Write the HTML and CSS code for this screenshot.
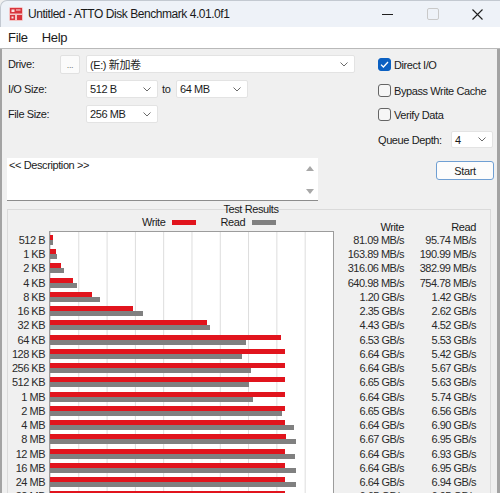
FILE: index.html
```html
<!DOCTYPE html>
<html lang="en">
<head>
    <meta charset="UTF-8">
    <meta name="viewport" content="width=device-width, initial-scale=1.0">
    <title>ATTO Disk Benchmark</title>
    <link rel="stylesheet" href="styles.css">
</head>
<body>

<div class="window">
    <div class="titlebar">
        <svg class="app-icon" width="14" height="14" viewBox="0 0 14 14">
            <rect width="14" height="14" rx="1.5" fill="#f4c4c4"/>
            <rect x="1" y="1" width="12" height="5.5" fill="#d8343c"/>
            <rect x="2.5" y="2.5" width="3" height="2.5" fill="#fbe3e3"/>
            <rect x="7" y="2.5" width="4.5" height="1" fill="#fbe3e3"/>
            <rect x="1" y="8" width="5" height="5" fill="#d8343c"/>
            <rect x="8" y="8" width="5" height="5" fill="#d8343c"/>
            <rect x="2.5" y="9.5" width="2" height="2" fill="#fbe3e3"/>
        </svg>
        <span class="title">Untitled - ATTO Disk Benchmark 4.01.0f1</span>
        <div class="controls">
            <span class="ctl">
                <svg width="11" height="11" viewBox="0 0 11 11"><path d="M0 5.5H11" stroke="#1f1f1f" stroke-width="1"/></svg>
            </span>
            <span class="ctl">
                <svg width="12" height="12" viewBox="0 0 12 12"><rect x="0.5" y="0.5" width="11" height="11" rx="1.5" fill="none" stroke="#c9c9c9"/></svg>
            </span>
            <span class="ctl">
                <svg width="11" height="11" viewBox="0 0 11 11"><path d="M0.5 0.5L10.5 10.5M10.5 0.5L0.5 10.5" stroke="#1f1f1f" stroke-width="1.1"/></svg>
            </span>
        </div>
    </div>

    <div class="menubar">
        <span>File</span>
        <span>Help</span>
    </div>

    <div class="main">
        <div class="top">
            <div class="form">
                <div class="row row-drive">
                    <span class="lbl lbl-drive">Drive:</span>
                    <span class="browse">...</span>
                    <div class="select select-drive">
                        <span>(E:) 新加卷</span>
                        <svg class="chev" width="8" height="5" viewBox="0 0 8 5"><path d="M0.5 0.5L4 4L7.5 0.5" fill="none" stroke="#6a6a6a"/></svg>
                    </div>
                </div>
                <div class="row row-io">
                    <span class="lbl lbl-wide">I/O Size:</span>
                    <div class="select select-sm">
                        <span>512 B</span>
                        <svg class="chev" width="8" height="5" viewBox="0 0 8 5"><path d="M0.5 0.5L4 4L7.5 0.5" fill="none" stroke="#6a6a6a"/></svg>
                    </div>
                    <span class="to">to</span>
                    <div class="select select-sm">
                        <span>64 MB</span>
                        <svg class="chev" width="8" height="5" viewBox="0 0 8 5"><path d="M0.5 0.5L4 4L7.5 0.5" fill="none" stroke="#6a6a6a"/></svg>
                    </div>
                </div>
                <div class="row row-file">
                    <span class="lbl lbl-wide">File Size:</span>
                    <div class="select select-sm">
                        <span>256 MB</span>
                        <svg class="chev" width="8" height="5" viewBox="0 0 8 5"><path d="M0.5 0.5L4 4L7.5 0.5" fill="none" stroke="#6a6a6a"/></svg>
                    </div>
                </div>
                <div class="desc">
                    <span>&lt;&lt; Description &gt;&gt;</span>
                    <div class="scroll">
                        <span class="arrow-up"></span>
                        <span class="arrow-down"></span>
                    </div>
                </div>
            </div>

            <div class="options">
                <div class="opt">
                    <span class="check on">
                        <svg width="9" height="7" viewBox="0 0 9 7"><path d="M1 3.6L3.4 6L8 1" fill="none" stroke="#fff" stroke-width="1.3"/></svg>
                    </span>
                    Direct I/O
                </div>
                <div class="opt opt-2"><span class="check"></span>Bypass Write Cache</div>
                <div class="opt opt-3"><span class="check"></span>Verify Data</div>
                <div class="queue">
                    <span class="q-label">Queue Depth:</span>
                    <div class="select select-q">
                        <span>4</span>
                        <svg class="chev" width="8" height="5" viewBox="0 0 8 5"><path d="M0.5 0.5L4 4L7.5 0.5" fill="none" stroke="#6a6a6a"/></svg>
                    </div>
                </div>
                <button class="start">Start</button>
            </div>
        </div>

        <div class="results">
            <div class="results-title">Test Results</div>
            <div class="results-grid">
                <div></div>
                <div class="legend">
                    <span>Write</span><span class="swatch swatch-write"></span>
                    <span class="legend-read">Read</span><span class="swatch swatch-read"></span>
                </div>
                <div class="vhead"><span>Write</span><span>Read</span></div>

                <div class="sizes" id="sizes"></div>
                <div class="chart" id="chart"></div>
                <div class="values" id="values"></div>
            </div>
        </div>
    </div>
</div>

<script>
    const sizes = ['512 B', '1 KB', '2 KB', '4 KB', '8 KB', '16 KB', '32 KB', '64 KB', '128 KB', '256 KB',
        '512 KB', '1 MB', '2 MB', '4 MB', '8 MB', '12 MB', '16 MB', '24 MB', '32 MB'];
    const writes = ['81.09 MB/s', '163.89 MB/s', '316.06 MB/s', '640.98 MB/s', '1.20 GB/s', '2.35 GB/s',
        '4.43 GB/s', '6.53 GB/s', '6.64 GB/s', '6.64 GB/s', '6.65 GB/s', '6.64 GB/s', '6.65 GB/s',
        '6.64 GB/s', '6.67 GB/s', '6.64 GB/s', '6.64 GB/s', '6.64 GB/s', '6.65 GB/s'];
    const reads = ['95.74 MB/s', '190.99 MB/s', '382.99 MB/s', '754.78 MB/s', '1.42 GB/s', '2.62 GB/s',
        '4.52 GB/s', '5.53 GB/s', '5.42 GB/s', '5.67 GB/s', '5.63 GB/s', '5.74 GB/s', '6.56 GB/s',
        '6.90 GB/s', '6.95 GB/s', '6.93 GB/s', '6.95 GB/s', '6.94 GB/s', '6.95 GB/s'];

    // chart scale is 0 - 8 GB/s
    function pct(s){
        let n = parseFloat(s);
        if (s.indexOf('MB') > -1){
            n = n / 1000;
        }
        return (n / 8 * 100).toFixed(2) + '%';
    }

    const sizesEl = document.getElementById('sizes');
    const chartEl = document.getElementById('chart');
    const valuesEl = document.getElementById('values');

    sizes.forEach((size, i) => {
        sizesEl.innerHTML += `<div class="size">${size}</div>`;
        chartEl.innerHTML += `<div class="bars">
            <div class="bar bar-write" style="width:${pct(writes[i])}"></div>
            <div class="bar bar-read" style="width:${pct(reads[i])}"></div>
        </div>`;
        valuesEl.innerHTML += `<div class="value-row"><span>${writes[i]}</span><span>${reads[i]}</span></div>`;
    });
</script>
</body>
</html>
```

FILE: styles.css
```css
*{
    box-sizing: border-box;
}

body{
    margin: 0;
    width: 500px;
    height: 493px;
    overflow: hidden;
    background: #f0f0f0;
    font-family: "Liberation Sans", Arial, "Noto Sans CJK SC", sans-serif;
    color: #1b1b1b;
}

.window{
    height: 493px;
    overflow: hidden;
}

/* title bar */
.titlebar{
    height: 27px;
    display: flex;
    align-items: center;
    background: #eef2f8;
    padding-left: 8px;
    border-top: 1px solid #c3c9d1;
    border-left: 1px solid #c3c9d1;
    border-top-left-radius: 7px;
}
.app-icon{
    flex: none;
}
.title{
    margin-left: 5px;
    font-size: 12px;
    letter-spacing: -0.45px;
    color: #1a1a1a;
}
.controls{
    margin-left: auto;
    display: flex;
    height: 100%;
}
.ctl{
    width: 45px;
    display: flex;
    align-items: center;
    justify-content: center;
}

.menubar{
    height: 22px;
    background: #fff;
    display: flex;
    align-items: center;
    padding-left: 8px;
    font-size: 13px;
    letter-spacing: -0.3px;
    border-bottom: 1px solid #b9b9b9;
}
.menubar span{
    margin-right: 14px;
}

/* main panel */
.main{
    height: 444px;
    border-left: 2px solid #a3a3a3;
    border-right: 3px solid #a3a3a3;
    padding: 6px 0 0 5px;
    font-size: 11px;
    letter-spacing: -0.4px;
}
.top{
    display: flex;
}
.form{
    width: 348px;
}
.row{
    display: flex;
    align-items: flex-start;
    margin-left: 1px;
    height: 18px;
}
.row-drive{
    height: 19px;
}
.row-io{
    margin-top: 6px;
}
.row-file{
    margin-top: 7px;
}
.lbl{
    line-height: 18px;
}
.lbl-drive{
    width: 52px;
}
.lbl-wide{
    width: 78px;
}
.browse{
    width: 20px;
    height: 19px;
    margin-right: 6px;
    background: #fbfbfb;
    border: 1px solid #e1e1e1;
    border-radius: 2px;
    color: #7a7a7a;
    font-size: 9px;
    display: flex;
    align-items: flex-end;
    justify-content: center;
    padding-bottom: 3px;
    line-height: 9px;
}
.select{
    height: 18px;
    background: #fff;
    border: 1px solid #e3e3e3;
    border-radius: 2px;
    display: flex;
    align-items: center;
    justify-content: space-between;
    padding: 0 6px 0 3px;
}
.select-drive{
    width: 269px;
}
.select-sm{
    width: 72px;
}
.to{
    width: 18px;
    padding-left: 4px;
    line-height: 18px;
}

.desc{
    margin-top: 35px;
    width: 311px;
    height: 43px;
    background: #fff;
    border-bottom: 1px solid #8c8c8c;
    display: flex;
    padding: 1px 0 0 2px;
    line-height: 13px;
}
.scroll{
    margin-left: auto;
    width: 16px;
    display: flex;
    flex-direction: column;
    justify-content: space-between;
    align-items: center;
    padding: 7px 0 6px;
}
.arrow-up{
    width: 0;
    border-left: 4px solid transparent;
    border-right: 4px solid transparent;
    border-bottom: 5px solid #a8a8a8;
}
.arrow-down{
    width: 0;
    border-left: 4px solid transparent;
    border-right: 4px solid transparent;
    border-top: 5px solid #a8a8a8;
}

/* options column */
.options{
    margin-left: 23px;
    width: 116px;
    display: flex;
    flex-direction: column;
    padding-top: 3px;
}
.opt{
    display: flex;
    align-items: center;
    height: 13px;
}
.opt-2{
    margin-top: 13px;
}
.opt-3{
    margin-top: 11px;
}
.check{
    width: 13px;
    height: 13px;
    margin-right: 3px;
    border: 1px solid #656565;
    border-radius: 3px;
    background: #f6f6f6;
    display: flex;
    align-items: center;
    justify-content: center;
}
.check.on{
    background: #0b60c2;
    border-color: #0b60c2;
}
.queue{
    margin-top: 10px;
    display: flex;
    align-items: center;
}
.q-label{
    width: 73px;
}
.select-q{
    width: 42px;
    height: 17px;
}
.start{
    align-self: flex-end;
    margin-top: 13px;
    width: 58px;
    height: 19px;
    border: 1px solid #6f9fd3;
    border-radius: 3px;
    background: #fcfcfc;
    font-family: inherit;
    font-size: 11px;
    letter-spacing: -0.3px;
    color: #1b1b1b;
    padding: 0;
}

/* results */
.results{
    margin-top: 8px;
    width: 484px;
    height: 300px;
    border: 1px solid #dadada;
    border-bottom: none;
}
.results-title{
    margin-top: -7px;
    padding-left: 4px;
    text-align: center;
    line-height: 13px;
}
.results-grid{
    display: grid;
    grid-template-columns: 41px 285px 70px 72px;
}
.legend{
    display: flex;
    align-items: center;
    height: 12px;
    margin: 0 0 3px 93px;
}
.swatch{
    width: 24px;
    height: 5px;
    margin-left: 7px;
}
.swatch-write{
    background: #e1141d;
}
.swatch-read{
    background: #808080;
}
.legend-read{
    margin-left: 24px;
}
.vhead{
    grid-column: 3 / span 2;
    align-self: end;
    display: grid;
    grid-template-columns: 70px 72px;
    text-align: right;
    line-height: 13px;
    margin-bottom: -3px;
}

.sizes{
    padding: 2px 4px 0 0;
    color: #2a2a2a;
    letter-spacing: -0.5px;
}
.size{
    height: 14.24px;
    line-height: 14.24px;
    text-align: right;
}
.chart{
    height: 280px;
    border: 1px solid #9c9c9c;
    padding-top: 1px;
    background-color: #fff;
    background-image: linear-gradient(to right, #dcdcdc 1px, transparent 1px);
    background-size: 10% 100%;
}
.bars{
    height: 14.24px;
    padding-top: 2px;
}
.bar{
    height: 5px;
}
.bar-write{
    background: #e1141d;
}
.bar-read{
    background: #808080;
}
.values{
    grid-column: 3 / span 2;
    padding-top: 2px;
    color: #2a2a2a;
    letter-spacing: -0.5px;
}
.value-row{
    display: grid;
    grid-template-columns: 70px 72px;
    height: 14.24px;
    line-height: 14.24px;
    text-align: right;
}
```
